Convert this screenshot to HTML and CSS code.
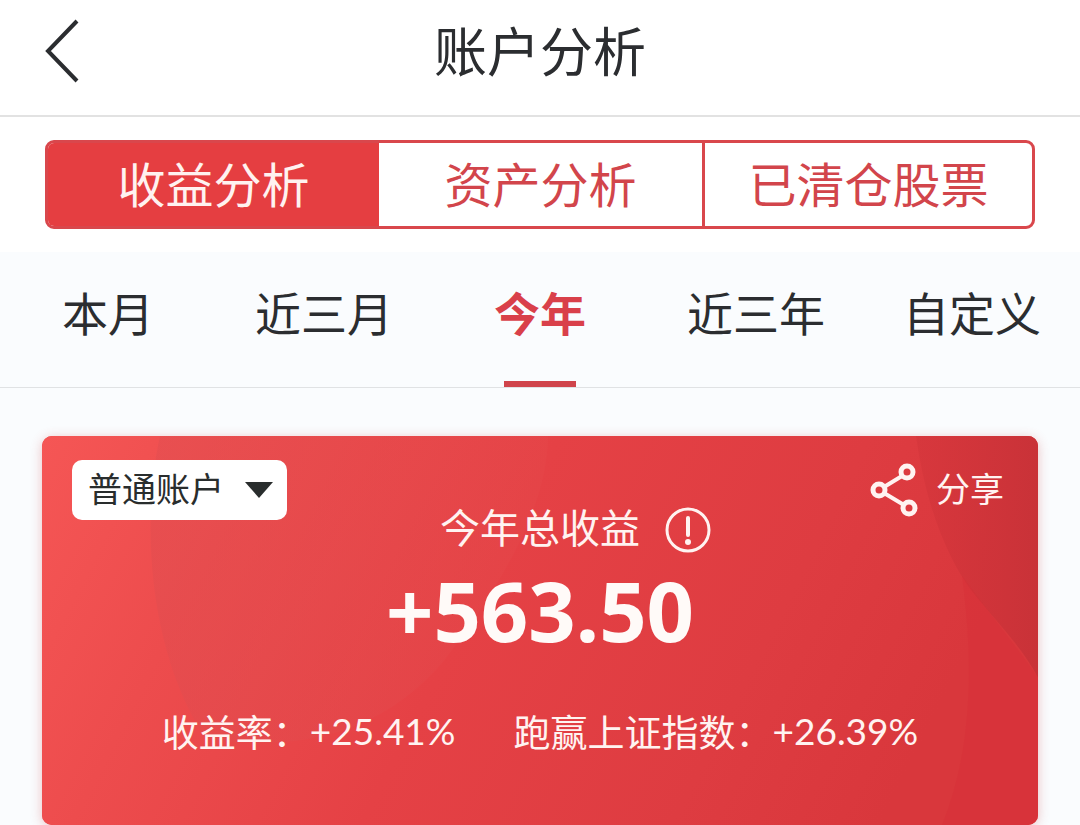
FILE: index.html
```html
<!DOCTYPE html>
<html lang="zh-CN">
<head>
<meta charset="utf-8">
<meta name="viewport" content="width=device-width, initial-scale=1">
<title>账户分析</title>
<link rel="stylesheet" href="styles.css">
</head>
<body>
<header class="topbar">
  <button class="back" type="button" aria-label="返回">
    <svg width="36" height="64" viewBox="0 0 36 64" fill="none" stroke="currentColor" stroke-width="4"><path d="M33 2 4 32l29 30"/></svg>
  </button>
  <h1 class="title">账户分析</h1>
</header>
<nav class="segments">
  <button class="segment segment-active" type="button">收益分析</button>
  <button class="segment" type="button">资产分析</button>
  <button class="segment segment-split" type="button">已清仓股票</button>
</nav>
<main class="content">
  <nav class="ranges">
    <button class="range" type="button">本月</button>
    <button class="range" type="button">近三月</button>
    <button class="range range-active" type="button">今年</button>
    <button class="range" type="button">近三年</button>
    <button class="range" type="button">自定义</button>
  </nav>
  <section class="card">
    <svg class="card-art" viewBox="0 0 996 390" preserveAspectRatio="none" aria-hidden="true">
      <defs>
        <linearGradient id="base" x1="0" y1="0" x2="1" y2="0.2">
          <stop offset="0" stop-color="#f55655"/>
          <stop offset="0.22" stop-color="#ed4c4d"/>
          <stop offset="0.5" stop-color="#e54145"/>
          <stop offset="0.8" stop-color="#de3c41"/>
          <stop offset="1" stop-color="#d9373c"/>
        </linearGradient>
        <linearGradient id="shade" x1="0" y1="0" x2="1" y2="0">
          <stop offset="0" stop-color="#de4d50" stop-opacity="0.45"/>
          <stop offset="1" stop-color="#e54a4c" stop-opacity="0.3"/>
        </linearGradient>
        <linearGradient id="corner" x1="0" y1="0" x2="1" y2="0">
          <stop offset="0" stop-color="#d2343a" stop-opacity="0.5"/>
          <stop offset="1" stop-color="#c93238"/>
        </linearGradient>
      </defs>
      <path fill="url(#base)" d="M0 0h996v390H0z"/>
      <path fill="url(#shade)" d="M118 0C98 90 108 220 164 304c88 12 174-2 239-80C450 160 505 80 506 0z"/>
      <path fill="url(#corner)" d="M874 0c10 70 30 120 56 156 27 33 50 56 66 86V0z"/>
      <path fill="#d82f36" fill-opacity="0.35" d="M996 242C970 205 945 175 920 140c12 90 10 176-20 250h96z"/>
    </svg>
    <div class="card-head">
      <div class="account">
        <select class="account-select" aria-label="账户类型"><option>普通账户</option></select>
        <svg class="account-arrow" width="28" height="16" viewBox="0 0 28 16" aria-hidden="true"><path fill="#292d2d" d="M0 0h28L14 16z"/></svg>
      </div>
      <div class="total">
        <div class="total-label">
          <h2 class="total-title">今年总收益</h2>
          <button class="info" type="button" aria-label="说明">
            <svg width="46" height="46" viewBox="0 0 46 46" fill="none" stroke="currentColor" stroke-linecap="round"><circle cx="23" cy="23" r="21" stroke-width="3"/><path stroke-width="4" d="M23 11v17"/><circle cx="23" cy="35" r="3" fill="currentColor" stroke="none"/></svg>
          </button>
        </div>
        <p class="total-value">+563.50</p>
      </div>
      <button class="share" type="button">
        <svg width="48" height="54" viewBox="0 0 48 54" fill="none" stroke="currentColor" stroke-width="5"><circle cx="37" cy="9" r="6"/><circle cx="9" cy="27" r="6"/><circle cx="39" cy="45" r="6"/><path stroke-width="4" d="M32 13 14 24M14 30l20 12"/></svg>
        <span>分享</span>
      </button>
    </div>
    <dl class="stats">
      <div class="stat"><dt>收益率：</dt><dd>+25.41%</dd></div>
      <div class="stat"><dt>跑赢上证指数：</dt><dd>+26.39%</dd></div>
    </dl>
  </section>
</main>
</body>
</html>
```
FILE: styles.css
```css
* {
  box-sizing: border-box;
  margin: 0;
  padding: 0;
}

body {
  display: flex;
  flex-direction: column;
  min-height: 100vh;
  background: #fff;
  color: #2b2d30;
  font-family: "Noto Sans CJK SC", sans-serif;
}

button,
select {
  border: 0;
  background: none;
  color: inherit;
  font: inherit;
}

svg {
  display: block;
}

.topbar {
  display: grid;
  grid-template-columns: 1fr auto 1fr;
  align-items: center;
  padding: 12px 44px 25px;
  border-bottom: 2px solid #e2e2e2;
}

.back {
  justify-self: start;
}

.title {
  padding-bottom: 4px;
  font-size: 53px;
  font-weight: 400;
  line-height: 74px;
}

.segments {
  display: grid;
  grid-template-columns: 331fr 323fr 330fr;
  margin: 23px 45px;
  border: 3px solid #d9474c;
  border-radius: 9px;
  overflow: hidden;
}

.segment {
  padding: 3px 0 8px;
  color: #d2454b;
  font-size: 48px;
  line-height: 72px;
}

.segment-split {
  border-left: 3px solid #d9474c;
}

.segment-active {
  background: #e53e41;
  color: #fff2f0;
}

.content {
  display: flex;
  flex: 1;
  flex-direction: column;
  background: #fafcfe;
}

.ranges {
  display: grid;
  grid-template-columns: repeat(5, 1fr);
  border-bottom: 1px solid #e0e2e4;
}

.range {
  display: flex;
  flex-direction: column;
  align-items: center;
  gap: 35px;
  padding-top: 24px;
  font-size: 46px;
  line-height: 70px;
}

.range::after {
  width: 72px;
  height: 6px;
  content: "";
}

.range-active {
  color: #d9404a;
  font-weight: 700;
}

.range-active::after {
  background: #d0444b;
}

.card {
  position: relative;
  flex: 1;
  margin: 48px 42px 0;
  padding: 24px 30px;
  border-radius: 10px;
  background: #e54145;
  box-shadow: 0 2px 12px rgba(200, 60, 60, 0.3);
  color: #fff3f1;
  overflow: hidden;
}

.card-art {
  position: absolute;
  inset: 0;
  width: 100%;
  height: 100%;
}

.card-head {
  position: relative;
  display: grid;
  grid-template-columns: 1fr auto 1fr;
  align-items: start;
}

.account {
  position: relative;
  justify-self: start;
}

.account-select {
  width: 215px;
  height: 60px;
  padding: 0 60px 6px 16px;
  border-radius: 10px;
  background: #fff;
  color: #292d2d;
  font-size: 34px;
  appearance: none;
}

.account-arrow {
  position: absolute;
  top: 22px;
  right: 14px;
  pointer-events: none;
}

.share {
  display: flex;
  align-items: center;
  justify-self: end;
  gap: 18px;
  padding: 3px 4px 0 0;
  font-size: 34px;
  line-height: 50px;
}

.share span {
  padding-bottom: 4px;
}

.total {
  padding-top: 36px;
}

.total-label {
  display: grid;
  grid-template-columns: 1fr auto 1fr;
  align-items: center;
}

.total-title {
  grid-column: 2;
  font-size: 40px;
  font-weight: 400;
  line-height: 60px;
}

.info {
  justify-self: end;
  padding: 8px 0 0 25px;
}

.total-value {
  color: #fffaf8;
  font-family: "Noto Sans", sans-serif;
  font-size: 83px;
  font-weight: 700;
  line-height: 108px;
  text-align: center;
}

.stats {
  position: relative;
  display: flex;
  justify-content: center;
  gap: 58px;
  padding-top: 39px;
  font-size: 37px;
  line-height: 56px;
}

.stat {
  display: flex;
  align-items: center;
}

.stat dd {
  font-family: Lato, sans-serif;
}
```
